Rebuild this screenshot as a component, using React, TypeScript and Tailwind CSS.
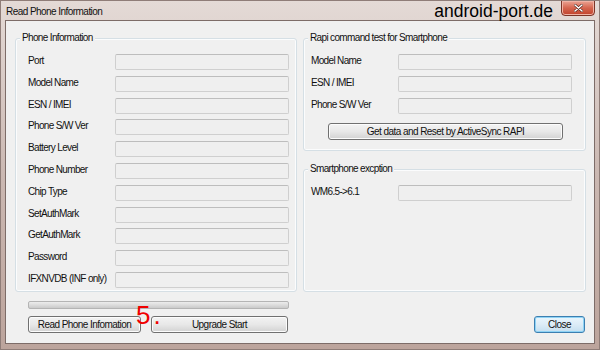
import React from "react";

const font = { fontFamily: '"Liberation Sans", Arial, sans-serif' };

function Field() {
  return (
    <div className="h-[16px] w-[174px] rounded-[2px] border border-[#cfcfcf] border-t-[#bdbdbd] bg-[#efefef]" />
  );
}

function Row({ label, labelW }: { label: string; labelW: string }) {
  return (
    <div className="flex items-center h-[16px]">
      <span className={`${labelW} -mt-[3px] text-[10px] tracking-[-0.65px] text-[#111] whitespace-nowrap`}>{label}</span>
      <Field />
    </div>
  );
}

function Group({ title, className, children }: { title: string; className: string; children?: React.ReactNode }) {
  return (
    <div className={`relative rounded-[3px] border border-[#d5dfe5] shadow-[inset_0_0_0_1px_#fbfcfd] ${className}`}>
      <span className="absolute left-[4px] -top-[7px] bg-[#f0f0f0] px-[2px] text-[10px] leading-[12px] tracking-[-0.65px] text-[#111] whitespace-nowrap">
        {title}
      </span>
      {children}
    </div>
  );
}

function Btn({ label, className }: { label: string; className: string }) {
  return (
    <div
      className={`flex items-center justify-center h-[17px] rounded-[3px] border border-[#707070] bg-gradient-to-b from-[#f3f3f3] via-[#e8e8e8] to-[#d2d2d2] shadow-[inset_0_0_0_1px_#fcfcfc] text-[10px] tracking-[-0.55px] text-[#111] whitespace-nowrap ${className}`}
    >
      {label}
    </div>
  );
}

export default function App() {
  const left = [
    "Port",
    "Model Name",
    "ESN / IMEI",
    "Phone S/W Ver",
    "Battery Level",
    "Phone Number",
    "Chip Type",
    "SetAuthMark",
    "GetAuthMark",
    "Password",
    "IFXNVDB (INF only)",
  ];
  return (
    <div style={font} className="w-[600px] h-[350px] flex flex-col border border-[#8f7d78] bg-gradient-to-b from-[#e4dad6] via-[#cbb8b2] to-[#bca49c] overflow-hidden">
      {/* Title bar */}
      <div className="h-[19px] flex items-start relative">
        <span className="ml-[5px] mt-[3px] text-[10px] tracking-[-0.55px] text-[#111] whitespace-nowrap">Read Phone Information</span>
        <span className="ml-auto mt-[0px] text-[17.5px] leading-[20px] text-black whitespace-nowrap">android-port.de</span>
        <div className="ml-[8px] mr-[4px] -mt-[1px] w-[34px] h-[16px] rounded-b-[4px] border border-[#7c3427] bg-gradient-to-b from-[#eba393] via-[#d4654f] to-[#c0412b] shadow-[inset_0_0_0_1px_#f0b3a5] flex items-center justify-center">
          <svg width="9" height="8" viewBox="0 0 9 8">
            <path d="M1 1 L8 7 M8 1 L1 7" stroke="#4a1a12" strokeWidth="2.6" strokeLinecap="round" />
            <path d="M1 1 L8 7 M8 1 L1 7" stroke="#ffffff" strokeWidth="1.6" strokeLinecap="round" />
          </svg>
        </div>
      </div>
      {/* Client area */}
      <div className="mx-[4px] mb-[5px] flex-1 border border-[#7d6c68] bg-[#f0f0f0] flex flex-col pt-[17px] pl-[9px]">
        <div className="flex gap-[6px]">
          <Group title="Phone Information" className="w-[282px] h-[254px] pt-[15px] pl-[12px]">
            <div className="flex flex-col gap-[5.8px]">
              {left.map((l) => (
                <Row key={l} label={l} labelW="w-[87px]" />
              ))}
            </div>
          </Group>
          <div className="flex flex-col">
            <Group title="Rapi command test for Smartphone" className="w-[283px] h-[113px] pt-[15px] pl-[7px]">
              <div className="flex flex-col gap-[5.8px]">
                {["Model Name", "ESN / IMEI", "Phone S/W Ver"].map((l) => (
                  <Row key={l} label={l} labelW="w-[87px]" />
                ))}
              </div>
              <Btn label="Get data and Reset by ActiveSync RAPI" className="mt-[9px] ml-[17px] w-[235px]" />
            </Group>
            <Group title="Smartphone excption" className="mt-[18px] w-[283px] h-[123px] pt-[15px] pl-[7px]">
              <Row label="WM6.5->6.1" labelW="w-[87px]" />
            </Group>
          </div>
        </div>
        <div className="flex items-end">
          <div className="relative ml-[13px] flex flex-col">
            <div className="mt-[9px] w-[261px] h-[8px] rounded-[2px] border border-[#b4b4b4] bg-gradient-to-b from-[#ececec] via-[#dcdcdc] to-[#cacaca]" />
            <div className="mt-[7px] flex gap-[10px]">
              <Btn label="Read Phone Infomation" className="w-[113px]" />
              <Btn label="Upgrade Start" className="w-[137px]" />
            </div>
            <span className="absolute left-[108px] top-[10px] text-[26px] leading-none tracking-[3px] text-[#f00000]">5.</span>
          </div>
          <div className="ml-auto mr-[9px] flex items-center justify-center h-[17px] w-[51px] rounded-[3px] border border-[#3c7fb1] bg-gradient-to-b from-[#eaf6fd] via-[#dcecf7] to-[#c4dff0] shadow-[inset_0_0_0_1px_#8fd3f5] text-[10px] tracking-[-0.5px] text-[#111]">
            Close
          </div>
        </div>
      </div>
    </div>
  );
}
